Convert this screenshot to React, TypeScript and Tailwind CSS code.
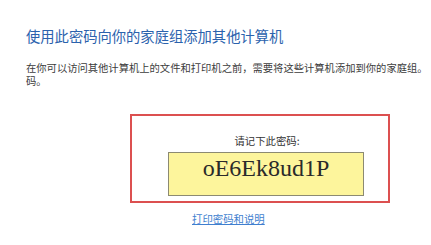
export default function App() {
  return (
    <div
      className="w-[431px] h-[245px] overflow-hidden bg-white pl-[26px] pt-[27px]"
      style={{ fontFamily: '"Noto Sans CJK SC", "Noto Sans", sans-serif' }}
    >
      {/* 标题 */}
      <h1 className="text-[14.3px] leading-[18px] text-[#2b62ad] whitespace-nowrap">
        使用此密码向你的家庭组添加其他计算机
      </h1>

      {/* 说明 */}
      <p className="mt-[16px] w-[403px] text-[10.3px] leading-[13px] text-[#3c3c3c]">
        在你可以访问其他计算机上的文件和打印机之前，需要将这些计算机添加到你的家庭组。码。
      </p>

      {/* 密码框 */}
      <div className="mt-[27px] ml-[104px] w-[260px] h-[89px] border-2 border-[#dc5050] pt-[18px]">
        <div className="ml-[36px] w-[196px] flex flex-col">
          <p className="text-center text-[10.4px] leading-[13px] text-[#333] pl-[2px]">
            请记下此密码:
          </p>
          <div className="mt-[5px] h-[44px] bg-[#fdf59c] border border-[#8c8a72] pt-[3px] text-center">
            <span
              className="text-[24px] leading-[24px] text-[#2a2a2a]"
              style={{ fontFamily: '"Liberation Serif", serif' }}
            >
              oE6Ek8ud1P
            </span>
          </div>
        </div>
      </div>

      {/* 链接 */}
      <a
        href="#"
        className="block mt-[9px] ml-[166px] w-fit text-[10.4px] leading-[13px] text-[#3f7fcf] underline"
      >
        打印密码和说明
      </a>
    </div>
  )
}
